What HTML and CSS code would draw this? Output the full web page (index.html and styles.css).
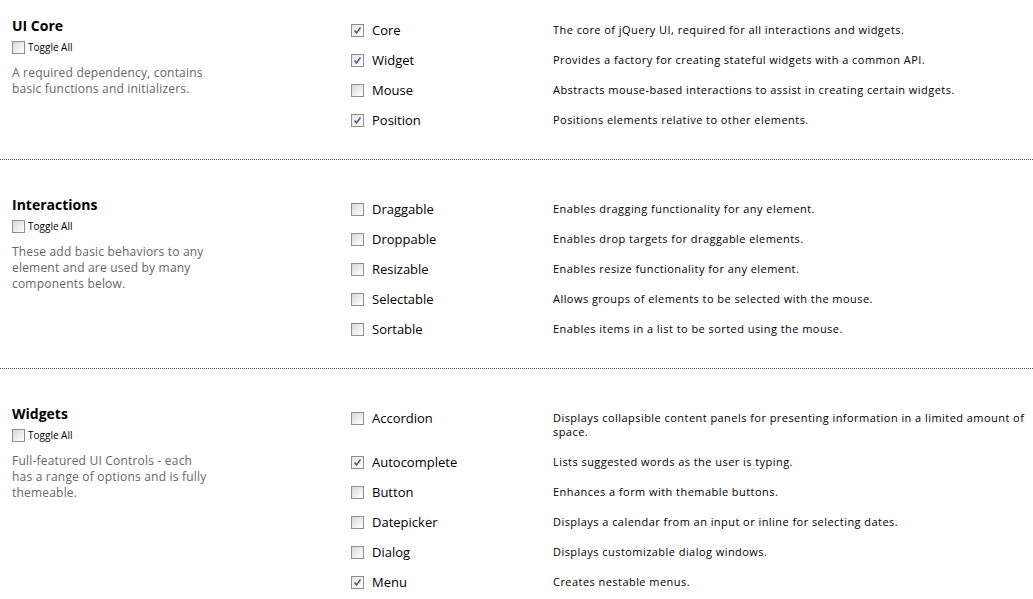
FILE: index.html
```html
<!DOCTYPE html>
<html>
<head>
<meta charset="utf-8">
<link rel="stylesheet" href="styles.css">
</head>
<body>
<div class="page">
  <section class="group first">
    <div class="info">
      <h2 class="title">UI Core</h2>
      <label class="toggle"><span class="cb"></span>Toggle All</label>
      <p class="summary">A required dependency, contains basic functions and initializers.</p>
    </div>
    <div class="items">
      <div class="item"><label class="name"><span class="cb checked"><svg viewBox="0 0 11 11"><path d="M2.5 5.5 L4.5 8 L8.5 2.5" /></svg></span>Core</label><p class="desc">The core of jQuery UI, required for all interactions and widgets.</p></div>
      <div class="item"><label class="name"><span class="cb checked"><svg viewBox="0 0 11 11"><path d="M2.5 5.5 L4.5 8 L8.5 2.5" /></svg></span>Widget</label><p class="desc">Provides a factory for creating stateful widgets with a common API.</p></div>
      <div class="item"><label class="name"><span class="cb"></span>Mouse</label><p class="desc">Abstracts mouse-based interactions to assist in creating certain widgets.</p></div>
      <div class="item"><label class="name"><span class="cb checked"><svg viewBox="0 0 11 11"><path d="M2.5 5.5 L4.5 8 L8.5 2.5" /></svg></span>Position</label><p class="desc">Positions elements relative to other elements.</p></div>
    </div>
  </section>
  <section class="group">
    <div class="info">
      <h2 class="title">Interactions</h2>
      <label class="toggle"><span class="cb"></span>Toggle All</label>
      <p class="summary">These add basic behaviors to any element and are used by many components below.</p>
    </div>
    <div class="items">
      <div class="item"><label class="name"><span class="cb"></span>Draggable</label><p class="desc">Enables dragging functionality for any element.</p></div>
      <div class="item"><label class="name"><span class="cb"></span>Droppable</label><p class="desc">Enables drop targets for draggable elements.</p></div>
      <div class="item"><label class="name"><span class="cb"></span>Resizable</label><p class="desc">Enables resize functionality for any element.</p></div>
      <div class="item"><label class="name"><span class="cb"></span>Selectable</label><p class="desc">Allows groups of elements to be selected with the mouse.</p></div>
      <div class="item"><label class="name"><span class="cb"></span>Sortable</label><p class="desc">Enables items in a list to be sorted using the mouse.</p></div>
    </div>
  </section>
  <section class="group">
    <div class="info">
      <h2 class="title">Widgets</h2>
      <label class="toggle"><span class="cb"></span>Toggle All</label>
      <p class="summary">Full-featured UI Controls - each has a range of options and is fully themeable.</p>
    </div>
    <div class="items">
      <div class="item"><label class="name"><span class="cb"></span>Accordion</label><p class="desc">Displays collapsible content panels for presenting information in a limited amount of space.</p></div>
      <div class="item"><label class="name"><span class="cb checked"><svg viewBox="0 0 11 11"><path d="M2.5 5.5 L4.5 8 L8.5 2.5" /></svg></span>Autocomplete</label><p class="desc">Lists suggested words as the user is typing.</p></div>
      <div class="item"><label class="name"><span class="cb"></span>Button</label><p class="desc">Enhances a form with themable buttons.</p></div>
      <div class="item"><label class="name"><span class="cb"></span>Datepicker</label><p class="desc">Displays a calendar from an input or inline for selecting dates.</p></div>
      <div class="item"><label class="name"><span class="cb"></span>Dialog</label><p class="desc">Displays customizable dialog windows.</p></div>
      <div class="item"><label class="name"><span class="cb checked"><svg viewBox="0 0 11 11"><path d="M2.5 5.5 L4.5 8 L8.5 2.5" /></svg></span>Menu</label><p class="desc">Creates nestable menus.</p></div>
    </div>
  </section>
</div>
</body>
</html>
```

FILE: styles.css
```css
html, body {
  margin: 0;
  padding: 0;
  background: #ffffff;
}
body {
  font-family: "Open Sans", "Noto Sans", sans-serif;
  color: #000;
}
.page {
  width: 1033px;
}
.group {
  display: grid;
  grid-template-columns: 339px 1fr;
  padding: 34px 0 24px 12px;
  border-bottom: 1px dotted #555;
}
.group.first {
  padding-top: 15px;
}
.info {
  display: flex;
  flex-direction: column;
}
.title {
  margin: 2px 0 0;
  font-size: 14px;
  line-height: 18px;
  font-weight: 700;
  color: #000;
}
.toggle {
  display: flex;
  align-items: center;
  gap: 3px;
  margin-top: 3px;
  height: 18px;
  font-size: 10px;
  color: #000;
}
.summary {
  margin: 9px 0 0;
  width: 200px;
  font-size: 12px;
  line-height: 16px;
  letter-spacing: 0.2px;
  color: #666;
}
.items {
  display: flex;
  flex-direction: column;
}
.item {
  display: grid;
  grid-template-columns: 202px 1fr;
  padding: 8px 0;
}
.name {
  display: flex;
  align-items: center;
  gap: 8px;
  height: 14px;
  font-size: 13px;
  line-height: 14px;
}
.desc {
  margin: 0;
  font-size: 11px;
  line-height: 14px;
  letter-spacing: 0.45px;
}
.cb {
  flex: none;
  box-sizing: border-box;
  width: 13px;
  height: 13px;
  border: 1px solid #8f8f8f;
  background: linear-gradient(135deg, #d8d8d8 0%, #f4f4f4 70%, #fff 100%);
  display: inline-flex;
  align-items: center;
  justify-content: center;
}
.cb.checked {
  background: linear-gradient(135deg, #e6e6e6 0%, #f8f8f8 70%, #fff 100%);
}
.cb svg {
  width: 11px;
  height: 11px;
}
.cb svg path {
  fill: none;
  stroke: #4a5d96;
  stroke-width: 1.6;
}
```
